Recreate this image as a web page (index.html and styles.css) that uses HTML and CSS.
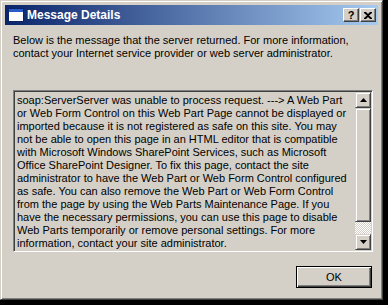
FILE: index.html
```html
<!DOCTYPE html>
<html lang="en">

<head>
    <meta charset="UTF-8">
    <title>Message Details</title>
    <link rel="stylesheet" href="styles.css">
</head>

<body>
    <div class="window">
        <div class="titlebar">
            <svg class="app-icon" width="16" height="14" viewBox="0 0 16 14">
                <rect x="0.5" y="0.5" width="15" height="13" fill="#fff" stroke="#0a246a"/>
                <rect x="1" y="1" width="14" height="3" fill="#2a5cc8"/>
            </svg>
            <span class="title">Message Details</span>
            <div class="caption-btns">
                <button class="cap-btn">?</button>
                <button class="cap-btn">
                    <svg width="8" height="7" viewBox="0 0 8 7">
                        <path d="M0 0h2l2 2 2-2h2v1L5 3.5 8 6v1H6L4 5 2 7H0V6l3-2.5L0 1z" fill="#000"/>
                    </svg>
                </button>
            </div>
        </div>

        <div class="content">
            <p class="intro">Below is the message that the server returned. For more information,<br>contact your Internet service provider or web server administrator.</p>

            <div class="details">
                <div class="details-text">soap:ServerServer was unable to process request. ---&gt; A Web Part<br>or Web Form Control on this Web Part Page cannot be displayed or<br>imported because it is not registered as safe on this site. You may<br>not be able to open this page in an HTML editor that is compatible<br>with Microsoft Windows SharePoint Services, such as Microsoft<br>Office SharePoint Designer. To fix this page, contact the site<br>administrator to have the Web Part or Web Form Control configured<br>as safe. You can also remove the Web Part or Web Form Control<br>from the page by using the Web Parts Maintenance Page. If you<br>have the necessary permissions, you can use this page to disable<br>Web Parts temporarily or remove personal settings. For more<br>information, contact your site administrator.</div>
                <div class="scrollbar">
                    <div class="sb-btn">
                        <svg width="7" height="4" viewBox="0 0 7 4"><polygon points="3.5,0 7,4 0,4" fill="#000"/></svg>
                    </div>
                    <div class="sb-thumb"></div>
                    <div class="sb-track"></div>
                    <div class="sb-btn">
                        <svg width="7" height="4" viewBox="0 0 7 4"><polygon points="0,0 7,0 3.5,4" fill="#000"/></svg>
                    </div>
                </div>
            </div>

            <div class="actions">
                <button class="ok-btn">OK</button>
            </div>
        </div>
    </div>
</body>

</html>
```

FILE: styles.css
```css
body {
    margin: 0;
    background-color: #000;
    font-family: "Liberation Sans", Arial, sans-serif;
    font-size: 11px;
    color: #000;
}

.window {
    width: 383px;
    height: 300px;
    box-sizing: border-box;
    background-color: #d4d0c8;
    border: 1px solid;
    border-color: #d4d0c8 #404040 #404040 #d4d0c8;
    box-shadow: inset 1px 1px #fff, inset -1px -1px #808080;
    padding: 4px;
}

.titlebar {
    height: 20px;
    display: flex;
    align-items: center;
    padding: 0 2px 0 3px;
    background: linear-gradient(to right, #0a246a, #a6caf0);
}

.app-icon {
    margin-right: 3px;
}

.title {
    flex: 1;
    color: #fff;
    font-weight: bold;
    font-size: 12px;
}

.caption-btns {
    display: flex;
    gap: 1px;
}

.cap-btn {
    width: 16px;
    height: 14px;
    padding: 0;
    display: flex;
    align-items: center;
    justify-content: center;
    background-color: #d4d0c8;
    border: 1px solid;
    border-color: #fff #404040 #404040 #fff;
    box-shadow: inset -1px -1px #808080;
    font-family: "Liberation Sans", Arial, sans-serif;
    font-weight: bold;
    font-size: 11px;
    line-height: 1;
    color: #000;
}

.content {
    padding: 0 5px 0 8px;
}

.intro {
    margin: 9px 0 30px;
    line-height: 13px;
}

.details {
    display: flex;
    height: 162px;
    box-sizing: border-box;
    border: 1px solid;
    border-color: #808080 #fff #fff #808080;
    box-shadow: inset 1px 1px #404040, inset -1px -1px #d4d0c8;
    padding: 1px;
}

.details-text {
    flex: 1;
    padding: 2px 2px;
    line-height: 13px;
    white-space: nowrap;
    overflow: hidden;
}

.scrollbar {
    width: 16px;
    display: flex;
    flex-direction: column;
}

.sb-btn,
.sb-thumb {
    box-sizing: border-box;
    background-color: #d4d0c8;
    border: 1px solid;
    border-color: #d4d0c8 #404040 #404040 #d4d0c8;
    box-shadow: inset 1px 1px #fff, inset -1px -1px #808080;
}

.sb-btn {
    height: 16px;
    display: flex;
    align-items: center;
    justify-content: center;
}

.sb-thumb {
    flex: 1;
}

.sb-track {
    height: 12px;
    background: repeating-conic-gradient(#fff 0 25%, #d4d0c8 0 50%) 0 0 / 2px 2px;
}

.actions {
    display: flex;
    justify-content: flex-end;
    margin-top: 14px;
    padding-right: 1px;
}

.ok-btn {
    width: 76px;
    height: 22px;
    padding: 0;
    background-color: #d4d0c8;
    border: 1px solid #000;
    box-shadow: inset 1px 1px #fff, inset -1px -1px #404040, inset -2px -2px #808080;
    font-family: "Liberation Sans", Arial, sans-serif;
    font-size: 11px;
    color: #000;
}
```
